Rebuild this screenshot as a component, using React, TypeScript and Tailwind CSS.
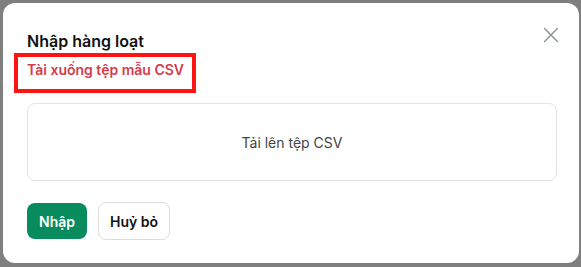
export default function App() {
  return (
    <div className="w-[581px] h-[267px] bg-[#7f7f7f] p-[3px] overflow-hidden" style={{ fontFamily: "Inter, 'Noto Sans', sans-serif" }}>
      {/* Modal */}
      <div className="relative w-[576px] h-[260px] bg-white rounded-[12px] pl-6 pr-[22px] pt-[26px]">
        <button className="absolute right-[17px] top-[21px] text-[#8a8f98]">
          <svg width="22" height="22" viewBox="0 0 24 24" fill="none" stroke="currentColor" strokeWidth="1.5" strokeLinecap="round">
            <path d="M5 5l14 14M19 5L5 19" />
          </svg>
        </button>

        <h2 className="text-[16px] leading-6 font-semibold text-[#111]">Nhập hàng loạt</h2>
        <div className="relative">
          <a className="block text-[14px] leading-5 font-semibold text-[#d63b4b] mt-[7px]">Tài xuống tệp mẫu CSV</a>
          {/* annotation box */}
          <div className="absolute left-[-13px] top-[-7px] w-[182px] h-[40px] border-[4px] border-[#ff1414]" />
        </div>

        <div className="mt-[23px] h-[78px] rounded-[8px] border border-[#e3e3e3] flex items-center justify-center text-[14px] text-[#444]">
          Tải lên tệp CSV
        </div>

        <div className="flex gap-[11px] mt-[22px]">
          <button className="h-[36px] px-[12px] rounded-[8px] bg-[#088b5d] text-white text-[14px] font-semibold">Nhập</button>
          <button className="h-[38px] -mt-px px-[11px] rounded-[8px] border border-[#dcdcdc] bg-white text-[#111] text-[14px] font-semibold">Huỷ bỏ</button>
        </div>
      </div>
    </div>
  );
}
